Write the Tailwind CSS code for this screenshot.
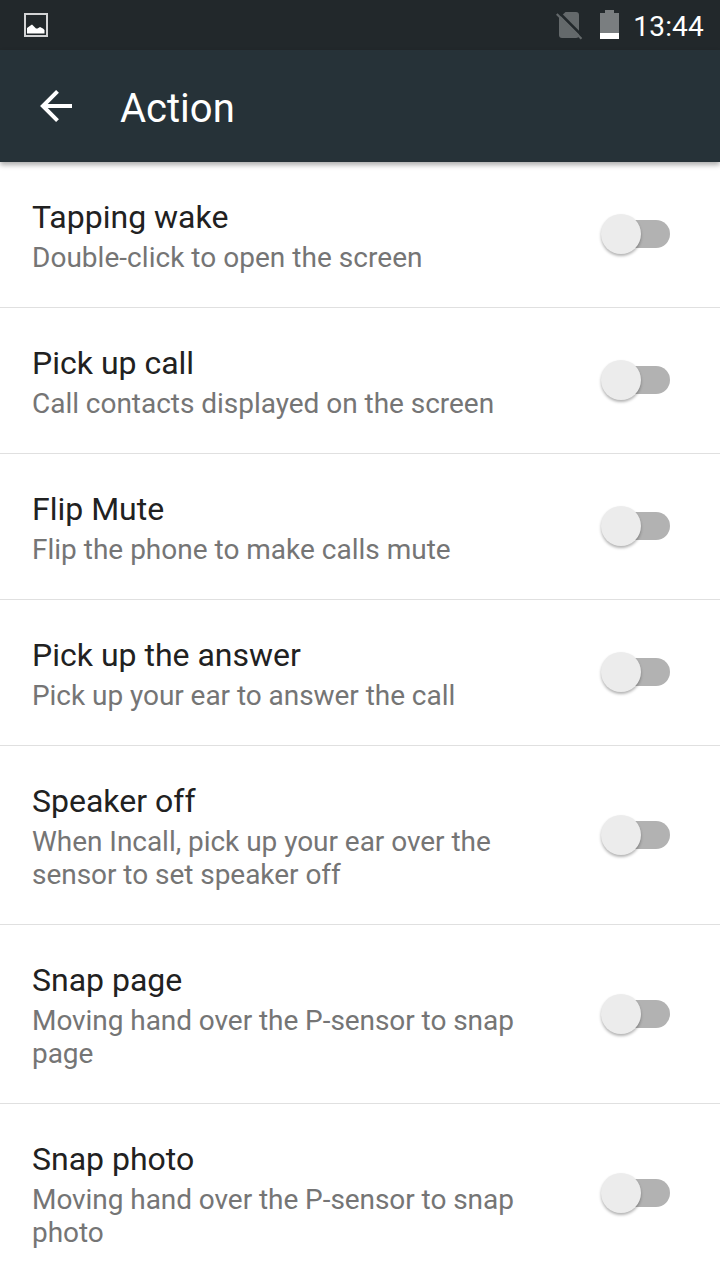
<!DOCTYPE html>
<html lang="en">
<head>
<meta charset="utf-8">
<title>Action</title>
<script src="https://cdn.jsdelivr.net/npm/@tailwindcss/browser@4"></script>
</head>
<body class="w-[720px] h-[1280px] overflow-hidden bg-white font-[Roboto,sans-serif]">
<div class="h-[50px] bg-[#22282b] flex items-center justify-between pl-6 pr-4 text-white">
  <svg class="w-6 h-6" viewBox="0 0 24 24"><rect x="1" y="1" width="22" height="22" fill="none" stroke="#d3d4d5" stroke-width="2"/><path d="M3 20.500V15l3.500-2.500L8 11.500l4 4h1.500l2.500-1.500 3 1.500 1.500 1.500v3.500z" fill="#fff"/></svg>
  <div class="flex items-center h-full">
    <svg class="w-[27px] h-[30px] mr-[17px]" viewBox="0 0 27 30"><path d="M3 8V25q0 3 3 3h14q3 0 3-3V5q0-3-3-3H9.500z" fill="#64696b"/><path d="M2.500 2L27 26.500" stroke="#22282b" stroke-width="2.600"/><path d="M.8 4L25.500 28.700" stroke="#64696b" stroke-width="2.200"/></svg>
    <svg class="w-[19px] h-[30px] mr-[14px]" viewBox="0 0 19 30"><path d="M0 3h5V0h9v3h5v20H0z" fill="#7a7e80"/><path d="M0 23h19v6H0z" fill="#fff"/></svg>
    <span class="text-[28px] leading-[50px] pt-[3px] tracking-[0.2px]">13:44</span>
  </div>
</div>
<header class="relative h-28 bg-[#263238] flex items-center text-white pl-10 shadow-[0_3px_5px_rgba(0,0,0,0.32)]">
  <svg class="w-8 h-8" viewBox="0 0 32 32"><path d="M32 16H3M17.500 1.400L2.900 16l14.600 14.600" fill="none" stroke="#fff" stroke-width="4"/></svg>
  <h1 class="ml-12 pt-[5px] text-[40px] leading-[48px]">Action</h1>
</header>
<main id="list" class="text-[#212121]"></main>
<template id="row">
  <section class="flex items-start justify-between border-b border-[#e0e0e0] pl-8 pr-[50px]">
    <div class="pt-9 w-[500px]">
      <h2 class="text-[32px] leading-[38px]"></h2>
      <p class="mt-[5px] text-[28px] leading-[33px] text-[#757575] whitespace-pre-line"></p>
    </div>
    <div class="switch w-[70px] h-7 flex items-center">
      <div class="ml-1.5 w-16 h-7 rounded-full bg-[#b2b2b2] flex items-center"><div class="-ml-[5.500px] w-10 h-10 shrink-0 rounded-full bg-[#ececec] shadow-[0_2px_3px_rgba(0,0,0,0.3)]"></div></div>
    </div>
  </section>
</template>
<script>
const items = [
  ["Tapping wake", "Double-click to open the screen", "tracking-[0.03px]"],
  ["Pick up call", "Call contacts displayed on the screen", "tracking-[-0.03px]"],
  ["Flip Mute", "Flip the phone to make calls mute", "tracking-normal"],
  ["Pick up the answer", "Pick up your ear to answer the call", "tracking-[-0.05px]"],
  ["Speaker off", "When Incall, pick up your ear over the\nsensor to set speaker off", "tracking-[-0.04px]"],
  ["Snap page", "Moving hand over the P-sensor to snap\npage", "tracking-[-0.06px]"],
  ["Snap photo", "Moving hand over the P-sensor to snap\nphoto", "tracking-[-0.06px]"]
];
for (const [title, text, tracking] of items) {
  const row = document.getElementById("row").content.cloneNode(true);
  const tall = text.includes("\n");
  row.querySelector("h2").textContent = title;
  row.querySelector("p").textContent = text;
  row.querySelector("p").classList.add(tracking);
  row.querySelector(".switch").classList.add(tall ? "mt-[75px]" : "mt-[58px]");
  row.firstElementChild.classList.add(tall ? "h-[179px]" : "h-[146px]");
  document.getElementById("list").append(row);
}
</script>
</body>
</html>
